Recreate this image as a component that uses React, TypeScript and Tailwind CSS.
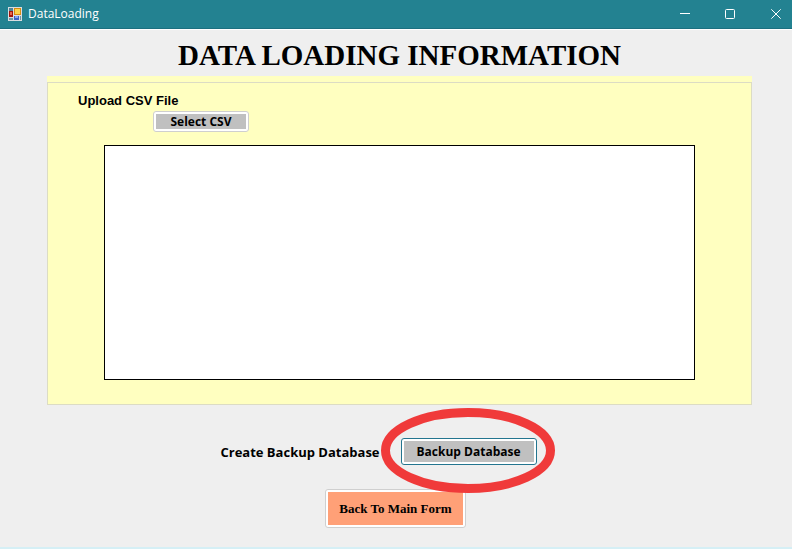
import React from "react";

function FormIcon() {
  return (
    <svg width="14" height="14" viewBox="0 0 14 14" aria-hidden="true">
      <rect width="14" height="14" fill="#d9dde0" />
      <rect x="1" y="1" width="4" height="3" fill="#4e8497" />
      <rect x="1" y="4" width="4" height="6" fill="#a3150c" />
      <rect x="2" y="5" width="2" height="3" fill="#e8684c" />
      <rect x="1" y="11" width="4" height="2" fill="#6d98a5" />
      <rect x="6" y="1" width="7" height="7" fill="#d88a12" />
      <rect x="7" y="2" width="5" height="5" fill="#fbd34c" />
      <rect x="6" y="9" width="5" height="4" fill="#3c62c4" />
      <rect x="7" y="9" width="3" height="2" fill="#86a7ee" />
      <rect x="12" y="9" width="1" height="4" fill="#6d98a5" />
    </svg>
  );
}

function TitleBar() {
  return (
    <header className="flex h-[29px] items-center justify-between border-b border-[#1c7080] bg-[#238291] pl-2 text-white">
      <div className="flex items-center gap-1.5">
        <FormIcon />
        <span className="font-['Open_Sans','Noto_Sans',sans-serif] text-xs leading-4">DataLoading</span>
      </div>
      <div className="flex h-full items-center">
        <button aria-label="Minimize" className="flex h-full w-[45px] items-center justify-center">
          <svg width="10" height="10" viewBox="0 0 10 10" fill="none" stroke="currentColor">
            <path d="M0 4.5H10" />
          </svg>
        </button>
        <button aria-label="Maximize" className="flex h-full w-[45px] items-center justify-center">
          <svg width="10" height="10" viewBox="0 0 10 10" fill="none" stroke="currentColor">
            <rect x="0.5" y="0.5" width="9" height="9" rx="1" />
          </svg>
        </button>
        <button aria-label="Close" className="flex h-full w-10 items-center justify-center pl-2">
          <svg width="10" height="10" viewBox="0 0 10 10" fill="none" stroke="currentColor">
            <path d="M0.3 0.3L9.7 9.7M9.7 0.3L0.3 9.7" />
          </svg>
        </button>
      </div>
    </header>
  );
}

export default function App() {
  return (
    <div className="flex min-h-screen flex-col border-b-2 border-[#d5eff5] bg-[#efefef] text-black">
      <TitleBar />
      <main className="flex flex-1 flex-col border-t border-white pr-10 pl-[47px]">
        <h1 className="flex h-[46px] items-center justify-center pt-1 font-['Liberation_Serif',serif] text-[29px] leading-8 font-bold whitespace-nowrap">
          DATA LOADING INFORMATION
        </h1>
        <section className="bg-[#ffffc0] pt-1.5">
          <div className="border border-[#dcdcc4] pt-2.5 pb-6">
            <label
              htmlFor="csv-content"
              className="block pl-[30px] font-['Liberation_Sans',Arial,sans-serif] text-[13px] leading-4 font-bold"
            >
              Upload CSV File
            </label>
            <button className="mt-0.5 ml-[105px] block h-[21px] w-24 rounded-[3px] border border-[#cfcfcf] bg-white p-0.5">
              <span className="flex h-full items-center justify-center bg-[#c0c0c0] font-['Open_Sans','Noto_Sans',sans-serif] text-xs leading-4 font-bold">
                Select CSV
              </span>
            </button>
            <div className="mt-[13px] px-14">
              <textarea
                id="csv-content"
                readOnly
                className="block h-[235px] w-full resize-none border border-black bg-white outline-none"
              />
            </div>
          </div>
        </section>
        <div className="mt-[33px] flex items-center justify-center gap-[21px] pr-[42px] font-['Open_Sans','Noto_Sans',sans-serif] font-bold">
          <label htmlFor="backup" className="text-[13px] leading-4 whitespace-nowrap">
            Create Backup Database
          </label>
          <div className="relative">
            <button
              id="backup"
              className="block h-[27px] w-[136px] rounded-[3px] border border-[#23758f] bg-white p-0.5"
            >
              <span className="flex h-full items-center justify-center bg-[#c0c0c0] text-xs leading-4">
                Backup Database
              </span>
            </button>
            <svg
              className="pointer-events-none absolute -top-[30px] -left-5 z-10 max-w-none"
              width="174"
              height="85"
              viewBox="0 0 174 85"
              fill="none"
              aria-hidden="true"
            >
              <ellipse cx="87" cy="42.5" rx="82.5" ry="38" stroke="#f03a3a" strokeWidth="9" />
            </svg>
          </div>
        </div>
        <div className="mt-6 flex justify-center pr-2">
          <button className="h-[39px] w-[141px] rounded-[3px] border border-[#cfcfcf] bg-white p-0.5">
            <span className="flex h-full items-center justify-center bg-[#ffa077] font-['Liberation_Serif',serif] text-[13px] leading-4 font-bold">
              Back To Main Form
            </span>
          </button>
        </div>
      </main>
    </div>
  );
}
